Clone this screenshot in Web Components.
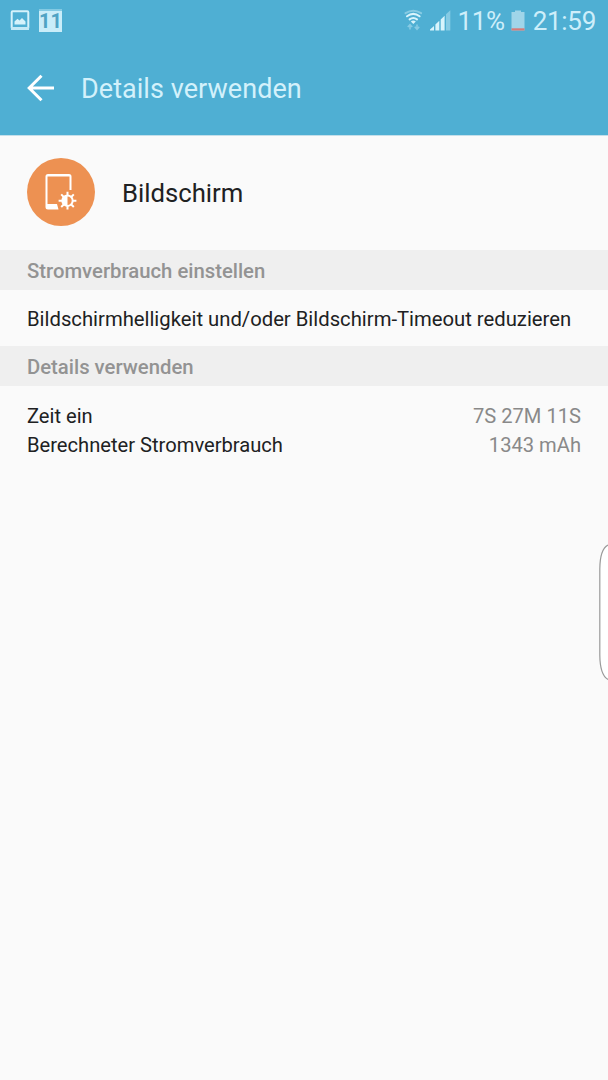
<!DOCTYPE html>
<html lang="de">
<head>
<meta charset="utf-8">
<meta name="viewport" content="width=device-width, initial-scale=1">
<title>Details verwenden</title>
<style>
  body {
    margin: 0;
    background: #fafafa;
    color: #202122;
    font-family: Roboto, "Liberation Sans", sans-serif;
  }
</style>
</head>
<body>
<usage-screen>
  <status-bar slot="top" day="11" battery="11%" time="21:59"></status-bar>
  <app-bar slot="top">Details verwenden</app-bar>
  <app-heading>Bildschirm</app-heading>
  <section-title>Stromverbrauch einstellen</section-title>
  <action-row>Bildschirmhelligkeit und/oder Bildschirm-Timeout reduzieren</action-row>
  <section-title>Details verwenden</section-title>
  <detail-list>
    <detail-row value="7S 27M 11S">Zeit ein</detail-row>
    <detail-row value="1343 mAh">Berechneter Stromverbrauch</detail-row>
  </detail-list>
  <edge-handle slot="overlay"></edge-handle>
</usage-screen>

<script>
// Shared base: opens the shadow root and fills it with the element's markup
class BaseElement extends HTMLElement {
  constructor() {
    super();
    this.attachShadow({ mode: 'open' });
  }

  connectedCallback() {
    this.shadowRoot.innerHTML = this.template();
  }

  attr(name) {
    return this.getAttribute(name) || '';
  }
}

class UsageScreen extends BaseElement {
  template() {
    return `
    <style>
      :host {
        display: flex;
        flex-direction: column;
        position: relative;
        height: 1080px;
        overflow: hidden;
      }

      header {
        background: #4fafd3;
        height: 136px;
        border-bottom: 1px solid #c4dfea;
        box-sizing: border-box;
      }
    </style>
    <header><slot name="top"></slot></header>
    <main><slot></slot></main>
    <slot name="overlay"></slot>
    `;
  }
}

/**
 * StatusBar
 * Attributes: day (calendar notification), battery, time
 */
class StatusBar extends BaseElement {
  template() {
    return `
    <style>
      :host {
        display: flex;
        justify-content: space-between;
        align-items: flex-start;
        height: 42px;
        padding: 0 12px 0 10px;
        box-sizing: border-box;
        color: #cdeefa;
        font-size: 26px;
        line-height: 42px;
      }

      div {
        display: flex;
        align-items: flex-start;
      }

      svg {
        display: block;
        flex: none;
      }

      .day {
        width: 23px;
        height: 23px;
        margin: 9px 0 0 9px;
        background: #c9edf9;
        color: #4fa3c4;
        border-top: 2px solid #83cae3;
        box-sizing: border-box;
        font-size: 20px;
        font-weight: 700;
        line-height: 20px;
        text-align: center;
      }

      .percent { letter-spacing: -.3px; }
      .battery { margin-left: 6px; }
      .time { margin-left: 8px; letter-spacing: -.3px; }
    </style>
    <div>
      <svg width="20" height="32" viewBox="0 0 20 32">
        <rect x="1.700" y="11.200" width="16.600" height="17.600" rx="1" fill="none" stroke="#d5f2fb" stroke-width="2"/>
        <path d="M1 27h18v3H1z" fill="#c3e9f6"/>
        <path d="M4.500 24.500v-3l3-2.800 2 1.700 2.500-2.400 3.500 3.500v3z" fill="#d5f2fb"/>
      </svg>
      <span class="day">${this.attr('day')}</span>
    </div>
    <div>
      <svg width="56" height="42" viewBox="0 0 56 42">
        <g fill="none" stroke-linecap="round">
          <path d="M4.500 13.200q7.800-5 15.600 0" stroke="#87cbe3" stroke-width="2"/>
          <path d="M6 16.300q6.300-4.800 12.600 0M8.600 19.400q3.700-2.800 7.400 0" stroke="#d8f4fc" stroke-width="2"/>
        </g>
        <path d="M9.800 21.500q2.500-1.800 5 0l-2.500 2.600z" fill="#d8f4fc"/>
        <path d="M9 29.500v-5M6.800 27l2.200-2.400 2.200 2.400M16 24.500v5M13.800 26.800l2.200 2.500 2.200-2.500" fill="none" stroke="#86cbe4" stroke-width="1.600"/>
        <g fill="#d8f4fc">
          <path d="M29 30.500v-1l4-3.600v4.600z"/>
          <path d="M34.400 30.500v-6l3.900-3.700v9.700z"/>
          <path d="M39.700 30.500V19.500l3.900-3.700v14.700z"/>
        </g>
        <path d="M45 30.500V14.300l4.300-4v20.200z" fill="#86cbe4"/>
      </svg>
      <span class="percent">${this.attr('battery')}</span>
      <svg class="battery" width="14" height="42" viewBox="0 0 14 42">
        <path d="M4 10.500h6V12h3.500v18.500H.5V12H4z" fill="#a0d5e9"/>
        <path d="M.5 28.300h13v2.200H.5z" fill="#d87a77"/>
      </svg>
      <span class="time">${this.attr('time')}</span>
    </div>
    `;
  }
}

class AppBar extends BaseElement {
  template() {
    return `
    <style>
      :host {
        display: flex;
        align-items: center;
        height: 92px;
        padding: 0 27px;
        box-sizing: border-box;
        color: #d3f1fb;
        font-size: 27px;
        letter-spacing: .05px;
      }

      svg { margin-right: 26px; }
      span { padding-top: 2px; }
    </style>
    <svg width="28" height="28" viewBox="0 0 28 28">
      <path d="M14.500 1.700L2.200 14l12.300 12.300M2.200 14H27" fill="none" stroke="#fff" stroke-width="3"/>
    </svg>
    <span><slot></slot></span>
    `;
  }
}

class AppHeading extends BaseElement {
  template() {
    return `
    <style>
      :host {
        display: flex;
        align-items: center;
        height: 114px;
        padding-left: 27px;
        box-sizing: border-box;
        font-size: 25.700px;
      }

      svg {
        margin: 0 27px 2px 0;
      }
    </style>
    <svg width="68" height="68" viewBox="0 0 68 68">
      <circle cx="34" cy="34" r="34" fill="#ed9152"/>
      <path d="M31.500 51.500H21q-2.500 0-2.500-2.500V18.500q0-2.500 2.500-2.500h21q2.500 0 2.500 2.500V32h-2V18.500H20.500V46h9.500z" fill="#fff"/>
      <g stroke="#fff" stroke-width="2" fill="none">
        <circle cx="40.500" cy="42.700" r="5.200"/>
        <path d="M40.500 33.800v4M40.500 47.600v4M31.600 42.700h4M45.400 42.700h4M34.200 36.400l2.800 2.800M44 46.200l2.800 2.800M34.200 49l2.800-2.800M44 39.200l2.800-2.800"/>
      </g>
      <path d="M40.500 37.500a5.200 5.200 0 0 0 0 10.400z" fill="#fff"/>
    </svg>
    <slot></slot>
    `;
  }
}

class SectionTitle extends BaseElement {
  template() {
    return `
    <style>
      :host {
        display: block;
        height: 40px;
        padding-left: 27px;
        background: #efefef;
        color: #939393;
        font-size: 20.300px;
        font-weight: 500;
        line-height: 42px;
      }
    </style>
    <slot></slot>
    `;
  }
}

class ActionRow extends BaseElement {
  template() {
    return `
    <style>
      :host {
        display: block;
        height: 56px;
        padding-left: 27px;
        font-size: 20.250px;
        line-height: 59px;
        white-space: nowrap;
      }
    </style>
    <slot></slot>
    `;
  }
}

class DetailList extends BaseElement {
  template() {
    return `
    <style>
      :host {
        display: block;
        padding: 16px 27px;
      }
    </style>
    <slot></slot>
    `;
  }
}

class DetailRow extends BaseElement {
  template() {
    return `
    <style>
      :host {
        display: flex;
        justify-content: space-between;
        font-size: 20.150px;
        line-height: 29px;
      }

      .value { color: #898989; }
    </style>
    <span><slot></slot></span>
    <span class="value">${this.attr('value')}</span>
    `;
  }
}

// Edge panel handle, floats over the right border of the screen
class EdgeHandle extends BaseElement {
  template() {
    return `
    <style>
      :host {
        position: absolute;
        top: 544px;
        right: 0;
      }

      svg { display: block; }
    </style>
    <svg width="9" height="137" viewBox="0 0 9 137">
      <path d="M9 1Q1 5 .8 25V111Q1 131 9 135.500" fill="#fff" stroke="#999" stroke-width="1.200"/>
    </svg>
    `;
  }
}

customElements.define('usage-screen', UsageScreen);
customElements.define('status-bar', StatusBar);
customElements.define('app-bar', AppBar);
customElements.define('app-heading', AppHeading);
customElements.define('section-title', SectionTitle);
customElements.define('action-row', ActionRow);
customElements.define('detail-list', DetailList);
customElements.define('detail-row', DetailRow);
customElements.define('edge-handle', EdgeHandle);
</script>
</body>
</html>
